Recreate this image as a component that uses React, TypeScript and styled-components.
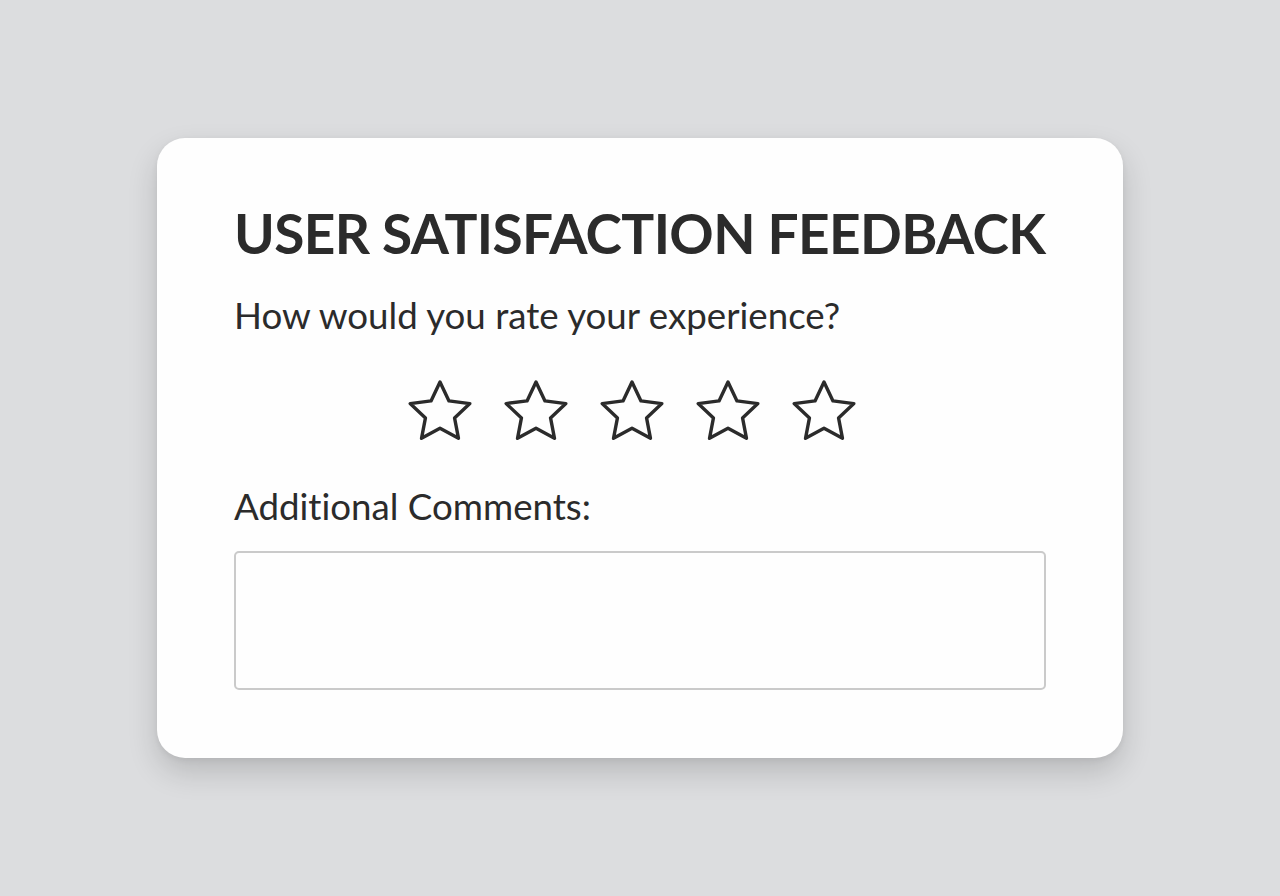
import styled, { createGlobalStyle } from 'styled-components';

const GlobalStyle = createGlobalStyle`
  * {
    margin: 0;
    padding: 0;
    box-sizing: border-box;
  }
  body {
    background: #dcdddf;
    font-family: 'Lato', 'Liberation Sans', sans-serif;
    font-variant-ligatures: none;
    color: #2b2b2b;
  }
`;

const Page = styled.div`
  width: 100%;
  height: 100vh;
  display: flex;
  align-items: center;
  justify-content: center;
`;

const Card = styled.section`
  width: 966px;
  height: 620px;
  background: #fefefe;
  border-radius: 28px;
  box-shadow: 0 14px 30px rgba(0, 0, 0, 0.16), 0 2px 6px rgba(0, 0, 0, 0.06);
  padding: 62px 77px 68px;
  display: flex;
  flex-direction: column;
`;

const Title = styled.h1`
  font-size: 55px;
  font-weight: 700;
  line-height: 67px;
  letter-spacing: -0.65px;
  white-space: nowrap;
  color: #2b2b2b;
`;

const Question = styled.p`
  margin-top: 27px;
  font-size: 36.7px;
  font-weight: 400;
  line-height: 43px;
  color: #2b2b2b;
`;

const Stars = styled.div`
  margin-top: 39px;
  display: flex;
  justify-content: center;
  gap: 26px;
  padding-right: 16px;
`;

const StarButton = styled.button`
  width: 70px;
  height: 70px;
  border: none;
  background: none;
  cursor: pointer;
  display: flex;
`;

const Label = styled.label`
  margin-top: 39px;
  font-size: 36.7px;
  font-weight: 400;
  line-height: 43px;
  color: #2b2b2b;
`;

const Comments = styled.textarea`
  margin-top: 23px;
  flex-shrink: 0;
  width: 812px;
  height: 139px;
  border: 2px solid #cacaca;
  border-radius: 5px;
  background: #fefefe;
  resize: none;
  outline: none;
  font-family: inherit;
  font-size: 18px;
  padding: 12px;
`;

const Star = () => (
  <svg width="70" height="70" viewBox="0 0 64 64" fill="none">
    <path
      d="M32 5.5 L40.2 22.8 L59.3 25.2 L45.3 38.3 L48.9 57 L32 47.8 L15.1 57 L18.7 38.3 L4.7 25.2 L23.8 22.8 Z"
      stroke="#2b2b2b"
      strokeWidth="3.1"
      strokeLinejoin="round"
    />
  </svg>
);

const App: React.FC = () => {
  return (
    <>
      <GlobalStyle />
      <Page>
        <Card>
          <Title>USER SATISFACTION FEEDBACK</Title>
          <Question>How would you rate your experience?</Question>
          <Stars>
            {[1, 2, 3, 4, 5].map((n) => (
              <StarButton key={n} aria-label={`${n} star`}>
                <Star />
              </StarButton>
            ))}
          </Stars>
          <Label htmlFor='comments'>Additional Comments:</Label>
          <Comments id='comments' />
        </Card>
      </Page>
    </>
  );
};

export default App;
